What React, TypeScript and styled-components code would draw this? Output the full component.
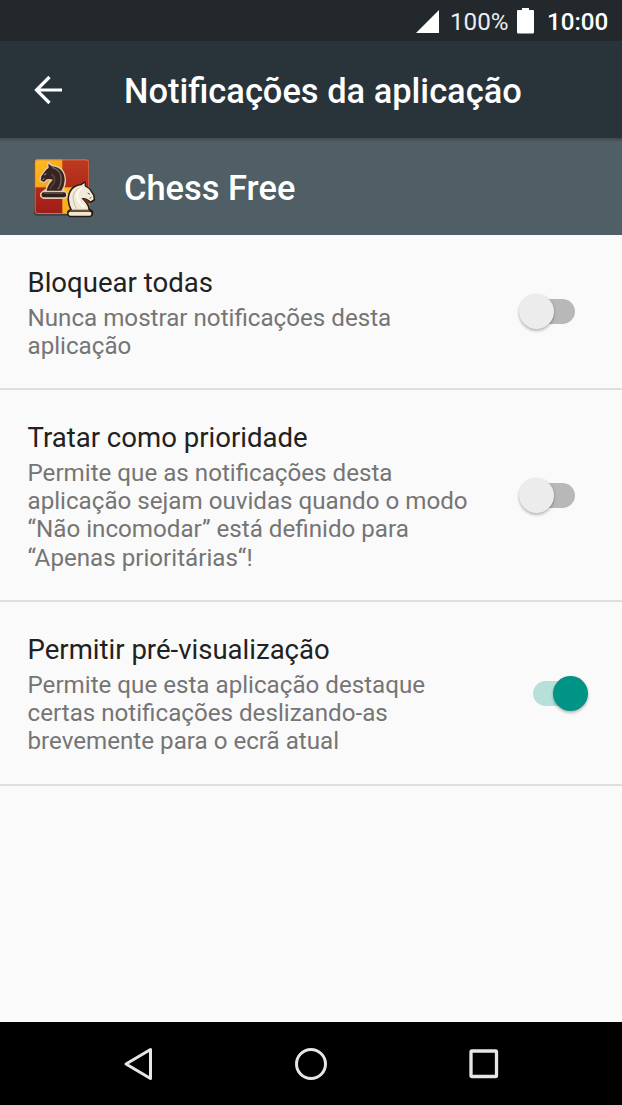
import React from 'react';
import styled, { createGlobalStyle } from 'styled-components';

const GlobalStyle = createGlobalStyle`
  * { box-sizing: border-box; }
  html, body { margin: 0; padding: 0; }
  body { background: #fafafa; font-family: Roboto, "Noto Sans", sans-serif; }
`;

const Screen = styled.div`
  width: 622px;
  height: 1105px;
  display: flex;
  flex-direction: column;
  overflow: hidden;
  background: #fafafa;
`;

const StatusBar = styled.header`
  height: 41px;
  flex: none;
  display: flex;
  justify-content: flex-end;
  align-items: center;
  padding: 2px 14px 0 0;
  background: #22282b;
  color: #fff;
`;

const StatusIcon = styled.svg`
  display: block;
  flex: none;
`;

const BatteryIcon = styled(StatusIcon)`
  margin-top: -1px;
`;

const BatteryLevel = styled.span`
  width: 59px;
  margin: 0 8px 0 11px;
  font-size: 24.2px;
  line-height: 28px;
  color: #eceeef;
  white-space: nowrap;
`;

const Clock = styled.span`
  width: 61px;
  margin-left: 13px;
  font-size: 24.2px;
  font-weight: 500;
  line-height: 28px;
  white-space: nowrap;
`;

const Toolbar = styled.div`
  height: 97px;
  flex: none;
  display: flex;
  align-items: center;
  padding-left: 34px;
  background: #28333a;
`;

const BackButton = styled.button`
  width: 90px;
  height: 60px;
  padding: 0;
  border: 0;
  background: none;
  display: flex;
  align-items: center;
`;

const BarTitle = styled.h1`
  margin: 0;
  padding-top: 3px;
  font-size: 34.45px;
  font-weight: 500;
  line-height: 40px;
  color: #fff;
  white-space: nowrap;
`;

const AppHeader = styled.div`
  height: 97px;
  flex: none;
  display: flex;
  align-items: center;
  padding-left: 30px;
  background: linear-gradient(#3d484f, #505e65 4px);
`;

const AppIcon = styled.svg`
  display: block;
  flex: none;
  margin: 6px 24px 0 0;
`;

const Settings = styled.main`
  flex: 1;
`;

const Row = styled.section<{ $height: number }>`
  height: ${(p) => p.$height}px;
  display: flex;
  justify-content: space-between;
  align-items: center;
  padding-left: 27.5px;
  border-bottom: 2px solid #dedede;
`;

const RowText = styled.div`
  align-self: flex-start;
  padding-top: 31px;
`;

const RowTitle = styled.h2`
  margin: 0 0 5px;
  font-size: 27.55px;
  font-weight: 400;
  line-height: 33px;
  color: #212121;
  white-space: nowrap;
`;

const Summary = styled.p`
  margin: 0;
  font-size: 24.17px;
  line-height: 28.2px;
  color: #757575;
  white-space: pre-line;
`;

const Track = styled.span<{ $on: boolean }>`
  display: flex;
  align-items: center;
  justify-content: ${(p) => (p.$on ? 'flex-end' : 'flex-start')};
  width: 42px;
  height: 25px;
  border-radius: 13px;
  background: ${(p) => (p.$on ? '#b7e0db' : '#b8b8b8')};
`;

const Toggle = styled.button`
  width: 109px;
  height: 60px;
  padding: 0 0 0 20px;
  border: 0;
  background: none;
  display: flex;
  align-items: center;
  flex: none;
`;

const Thumb = styled.span<{ $on: boolean }>`
  flex: none;
  width: 35px;
  height: 35px;
  border-radius: 50%;
  margin: ${(p) => (p.$on ? '0 -13px 0 0' : '0 0 0 -14px')};
  background: ${(p) => (p.$on ? '#009486' : '#ececec')};
  box-shadow: 0 2px 3px rgba(0, 0, 0, 0.25), 0 0 2px rgba(0, 0, 0, 0.08);
`;

const NavBar = styled.nav`
  height: 83px;
  flex: none;
  display: flex;
  justify-content: center;
  align-items: center;
  background: #000;
`;

const NavButton = styled.button`
  width: 173px;
  height: 83px;
  padding: 0;
  border: 0;
  background: none;
  display: flex;
  align-items: center;
  justify-content: center;
`;

const rows = [
  { title: 'Bloquear todas', text: 'Nunca mostrar notificações desta\naplicação', on: false, height: 155 },
  {
    title: 'Tratar como prioridade',
    text: 'Permite que as notificações desta\naplicação sejam ouvidas quando o modo\n“Não incomodar” está definido para\n“Apenas prioritárias“!',
    on: false,
    height: 212,
  },
  {
    title: 'Permitir pré-visualização',
    text: 'Permite que esta aplicação destaque\ncertas notificações deslizando-as\nbrevemente para o ecrã atual',
    on: true,
    height: 184,
  },
];

function ChessIcon() {
  return (
    <AppIcon width="70" height="70" viewBox="30 30 210 210">
      <defs>
        <linearGradient id="red" x1="0" y1="0" x2="0" y2="1">
          <stop offset="0" stopColor="#bd3a20" />
          <stop offset="1" stopColor="#a01c16" />
        </linearGradient>
        <linearGradient id="gold" x1="0" y1="0" x2="1" y2="1">
          <stop offset="0" stopColor="#ffbd22" />
          <stop offset="1" stopColor="#f29a12" />
        </linearGradient>
        <clipPath id="board"><rect x="44" y="43" width="164" height="164" rx="8" /></clipPath>
      </defs>
      <rect x="42" y="44" width="168" height="168" rx="9" fill="#30363a" opacity=".7" />
      <g clipPath="url(#board)">
        <rect x="44" y="43" width="164" height="164" fill="url(#red)" />
        <rect x="44" y="43" width="83" height="84" fill="url(#gold)" />
        <rect x="127" y="127" width="83" height="84" fill="url(#gold)" />
      </g>
      <rect x="45.5" y="44.5" width="161" height="161" rx="8" fill="none" stroke="#dc8060" strokeWidth="2.5" />
      <g stroke="#e8c9ae" strokeWidth="8" strokeLinejoin="round" fill="#e8c9ae">
        <path d="M85 55L95 63Q133 66 134 106Q133 124 125 134L132 140L139 147V153L133 158H71L64 153V147L71 140L80 135Q82 121 98 104Q88 100 80 103L72 111L62 106L64 94L78 75L86 68Z" />
      </g>
      <path d="M85 56L95 64Q133 67 134 106Q133 124 124 137H80Q82 121 99 104Q88 100 80 103L72 111L62 106L64 94L78 75L86 68Z" fill="#35241f" />
      <rect x="65" y="142" width="73" height="15" rx="6" fill="#2d211e" />
      <path d="M96 67Q126 75 123 108Q122 124 113 133" fill="none" stroke="#71625a" strokeWidth="4" />
      <path d="M94 87Q110 100 101 116Q92 124 91 133" fill="none" stroke="#55423b" strokeWidth="5" />
      <path d="M72 90L79 86M68 104L73 101" stroke="#b5a291" strokeWidth="3" />
      <path d="M72 145H130" stroke="#6a5850" strokeWidth="2.5" />
      <g stroke="#251913" strokeWidth="7" strokeLinejoin="round" fill="#251913">
        <path d="M194 113L184 120Q147 125 146 164Q147 181 154 193L145 200V209L150 213H211L216 208V200L206 192Q206 178 184 160Q193 157 203 163L212 170L222 164L220 151L207 132L194 124Z" />
      </g>
      <path d="M194 114L184 121Q148 126 147 164Q148 180 156 194H205Q205 179 184 160Q193 157 203 163L212 169L221 163L219 151L207 132L194 124Z" fill="#f2ead9" />
      <rect x="146" y="200" width="68" height="12" rx="5" fill="#f1e7d1" />
      <path d="M184 126Q155 138 160 164Q162 178 169 191" fill="none" stroke="#cdbd9d" strokeWidth="3" />
      <path d="M186 127Q168 139 172 159Q174 170 184 177L193 186" fill="none" stroke="#fffaf0" strokeWidth="6" />
      <path d="M203 144L210 148M209 160L214 157" stroke="#665b4b" strokeWidth="3" />
      <path d="M188 162Q196 160 206 168L210 174L202 178Z" fill="#6e2a18" />
      <path d="M151 197H208" stroke="#765c3e" strokeWidth="3" />
    </AppIcon>
  );
}

export default function App() {
  return (
    <>
      <GlobalStyle />
      <Screen>
        <StatusBar>
          <StatusIcon width="23" height="24" viewBox="0 0 23 24"><path d="M0 23L23 0V23Z" fill="#fff" /></StatusIcon>
          <BatteryLevel>100%</BatteryLevel>
          <BatteryIcon width="17" height="26" viewBox="0 0 17 26"><path d="M5 0H12V2H16Q17 2 17 3V24Q17 25.500 16 25.500H1Q0 25.500 0 24V3Q0 2 1 2H5Z" fill="#fff" /></BatteryIcon>
          <Clock>10:00</Clock>
        </StatusBar>
        <Toolbar>
          <BackButton aria-label="Voltar">
            <svg width="30" height="30" viewBox="0 0 30 30"><path d="M28 15H3M15.500 2L2.500 15L15.500 28" fill="none" stroke="#fff" strokeWidth="3.2" /></svg>
          </BackButton>
          <BarTitle>Notificações da aplicação</BarTitle>
        </Toolbar>
        <AppHeader>
          <ChessIcon />
          <BarTitle>Chess Free</BarTitle>
        </AppHeader>
        <Settings>
          {rows.map((r) => (
            <Row key={r.title} $height={r.height}>
              <RowText>
                <RowTitle>{r.title}</RowTitle>
                <Summary>{r.text}</Summary>
              </RowText>
              <Toggle role="switch" aria-checked={r.on} aria-label={r.title}>
                <Track $on={r.on}><Thumb $on={r.on} /></Track>
              </Toggle>
            </Row>
          ))}
        </Settings>
        <NavBar>
          <NavButton aria-label="Anterior">
            <svg width="34" height="36" viewBox="0 0 34 36"><path d="M29.500 3.500V32.500L5 18Z" fill="none" stroke="#e6e6e6" strokeWidth="3" strokeLinejoin="round" /></svg>
          </NavButton>
          <NavButton aria-label="Início">
            <svg width="36" height="36" viewBox="0 0 36 36"><circle cx="18" cy="18" r="14.500" fill="none" stroke="#e6e6e6" strokeWidth="3" /></svg>
          </NavButton>
          <NavButton aria-label="Recentes">
            <svg width="36" height="36" viewBox="0 0 36 36"><rect x="5" y="5" width="25.500" height="25.500" rx="1" fill="none" stroke="#e6e6e6" strokeWidth="3.300" strokeLinejoin="round" /></svg>
          </NavButton>
        </NavBar>
      </Screen>
    </>
  );
}
